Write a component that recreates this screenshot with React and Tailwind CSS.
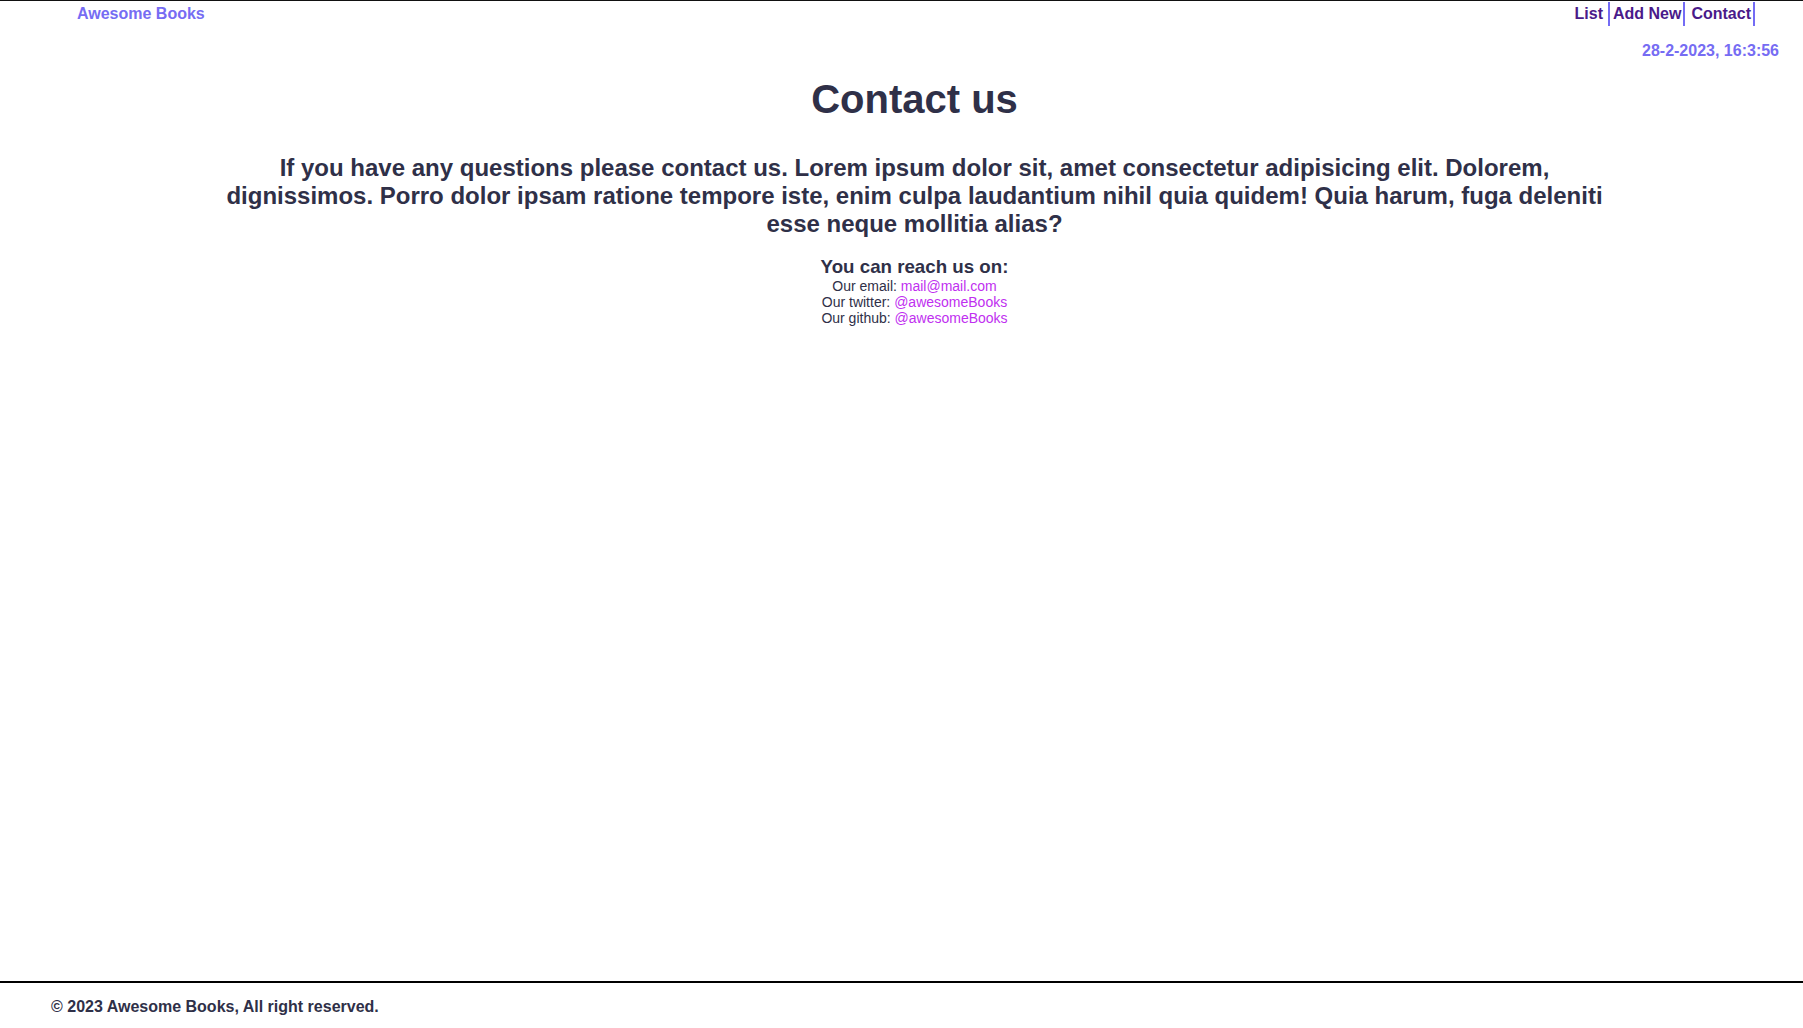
import React from "react";

export default function App() {
  return (
    <div
      className="min-h-screen flex flex-col bg-white border-t border-[#111] text-[#2f3048]"
      style={{ fontFamily: '"Liberation Sans", Arial, sans-serif' }}
    >
      <header className="flex justify-between items-start pt-[1px]">
        <a className="pl-[77px] py-[3px] leading-[18px] text-[16px] font-bold text-[#766cf3]">
          Awesome Books
        </a>
        <ul className="flex pr-[48px] text-[16px] font-bold text-[#4a1a8a]">
          <li className="py-[3px] leading-[18px] pl-[4px] pr-[5px] border-r-2 border-[#746cf5]">List</li>
          <li className="py-[3px] leading-[18px] pl-[3px] pr-[2px] border-r-2 border-[#746cf5]">Add New</li>
          <li className="py-[3px] leading-[18px] pl-[6px] pr-[2px] border-r-2 border-[#746cf5]">Contact</li>
        </ul>
      </header>
      <div className="flex justify-end pr-[24px] mt-[16px]">
        <span className="text-[16px] leading-[18px] font-bold text-[#766cf3]">28-2-2023, 16:3:56</span>
      </div>
      <main className="flex-1 flex flex-col items-center pl-[26px]">
        <h1 className="mt-[17px] text-[40px] leading-[45px] font-bold">Contact us</h1>
        <p className="mt-[32px] w-[1400px] text-center text-[24px] leading-[28px] font-bold">
          If you have any questions please contact us. Lorem ipsum dolor sit, amet consectetur adipisicing elit. Dolorem, dignissimos. Porro dolor ipsam ratione tempore iste, enim culpa laudantium nihil quia quidem! Quia harum, fuga deleniti esse neque mollitia alias?
        </p>
        <h3 className="mt-[18px] text-[18.72px] leading-[22px] font-bold">You can reach us on:</h3>
        <div className="text-[14px] leading-[16px] text-center">
          <p>
            Our email: <a className="text-[#c02ff0]">mail@mail.com</a>
          </p>
          <p>
            Our twitter: <a className="text-[#c02ff0]">@awesomeBooks</a>
          </p>
          <p>
            Our github: <a className="text-[#c02ff0]">@awesomeBooks</a>
          </p>
        </div>
      </main>
      <footer className="border-t-2 border-black pt-[15px] pb-[12px] pl-[51px]">
        <p className="text-[16px] leading-[18px] font-bold">© 2023 Awesome Books, All right reserved.</p>
      </footer>
    </div>
  );
}
